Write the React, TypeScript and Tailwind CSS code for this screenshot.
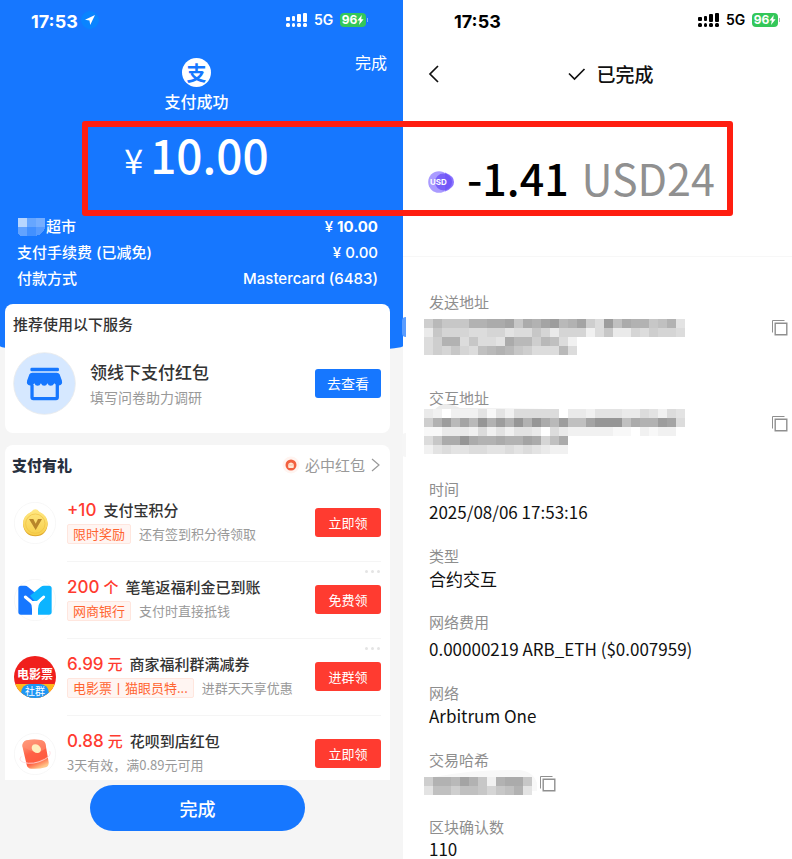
import type { ReactNode } from "react";

const BLUE = "#1677ff";

// Each hex digit is one cell, 0 = white, f = darkest grey
const SENDER_ROWS = [
  "7a888bbccd8cbdeabd75e9cbb89b4",
  "38666556645586366625833657665",
  "57bb58554caa7a952",
  "5768659aba87555a5",
];
const CONTRACT_ROWS = [
  "32022241425555503324443354254",
  "7beadafbebfbfcae99dfff9cbbed5",
  "1133325242443053222221102122",
  "58ccfcbbcbbdc69c",
  "2454455445454322",
];
const HASH_ROWS = ["7bbadb82bcc8", "4997998689b4"];

function Mosaic({ rows, children }: { rows: string[]; children?: ReactNode }) {
  const cell = 9;
  const width = rows[0].length * cell;
  const height = rows.length * cell;
  return (
    <svg
      className="block overflow-visible"
      width={width}
      height={height}
      viewBox={`0 0 ${width} ${height}`}
      shapeRendering="crispEdges"
      aria-hidden="true"
    >
      {children}
      {rows.map((row, y) =>
        row.split("").map((c, x) => {
          const v = 255 - parseInt(c, 16) * 7;
          return (
            <rect key={`${x}-${y}`} x={x * cell} y={y * cell} width={cell} height={cell} fill={`rgb(${v},${v},${v})`} />
          );
        })
      )}
    </svg>
  );
}

function Signal() {
  return (
    <svg width="21" height="15" viewBox="0 0 21 15" fill="currentColor" aria-hidden="true">
      <rect x="0" y="4" width="4" height="4" rx="1" />
      <rect x="6" y="3" width="3" height="5" rx="1" />
      <rect x="11" y="1" width="4" height="8" rx="1" />
      <rect x="17" y="0" width="4" height="9" rx="1" />
      <rect x="0" y="10" width="4" height="4" rx="1.5" />
      <rect x="6" y="10" width="3" height="4" rx="1.5" />
      <rect x="11" y="10" width="4" height="4" rx="1.5" />
      <rect x="17" y="10" width="4" height="4" rx="1.5" />
    </svg>
  );
}

function StatusRight({ capClass }: { capClass: string }) {
  return (
    <div className="flex items-center">
      <Signal />
      <span className="ml-[7px] w-[26px] text-[14px] leading-5 font-semibold">5G</span>
      <span className="flex h-[14px] w-[26px] items-center justify-center rounded-[4px] bg-[#34c759] text-[12px] leading-[14px] font-bold text-white">
        96
        <svg width="7" height="10" viewBox="0 0 7 10" fill="currentColor" aria-hidden="true">
          <path d="M4.8 0 0.4 5.6h2.4L2 10l4.6-5.8H4.2z" />
        </svg>
      </span>
      <span className={`ml-px h-1 w-px ${capClass}`} />
    </div>
  );
}

function StoreIcon() {
  return (
    <svg className="shrink-0" width="63" height="63" viewBox="39 34 192 192" aria-hidden="true">
      <circle cx="135" cy="130" r="94" fill="#d6e8ff" stroke="#e9eaec" strokeWidth="2.5" />
      <rect x="92" y="82" width="87" height="11" rx="4" fill={BLUE} />
      <path d="M97 134v38q0 4 4 4h69q4 0 4-4v-38" fill="none" stroke={BLUE} strokeWidth="10" />
      <path
        d="M98 97h74q7 0 9 5l7 19q3 14-9 15-9 1-14-7-4 8-11 8t-10-8q-3 8-10 8t-10-8q-3 8-10 8t-10-8q-4 8-13 7-12-1-9-15l7-19q2-5 9-5z"
        fill={BLUE}
      />
    </svg>
  );
}

function PointsIcon() {
  return (
    <svg className="shrink-0" width="42" height="42" viewBox="0 0 126 126" aria-hidden="true">
      <defs>
        <linearGradient id="gold" x1="0" y1="0" x2="0" y2="1">
          <stop offset="0" stopColor="#ffe884" />
          <stop offset="1" stopColor="#f7cf4a" />
        </linearGradient>
      </defs>
      <circle cx="63" cy="63" r="62" fill="#fff" stroke="#f5f5f5" strokeWidth="2.5" />
      <path d="M64 24q6 0 12 7 24 11 25 35-3 36-37 37-34-1-37-37 1-24 25-35 6-7 12-7z" fill="#e0a72b" />
      <path d="M64 22q6 0 12 7 24 11 25 35-3 34-37 36-34-2-37-36 1-24 25-35 6-7 12-7z" fill="url(#gold)" />
      <circle cx="64" cy="65" r="29" fill="none" stroke="#efbf42" strokeWidth="2" />
      <path d="M45 51h13l7 14 7-14h12L65 84z" fill="#b8862a" />
    </svg>
  );
}

function BankIcon() {
  return (
    <svg className="shrink-0" width="42" height="42" viewBox="0 0 126 126" aria-hidden="true">
      <circle cx="63" cy="63" r="62" fill="#fff" stroke="#f5f5f5" strokeWidth="2.5" />
      <path d="M13 28q0-8 8-8h12q5 0 9 4l22 18v65H21q-8 0-8-8z" fill={BLUE} />
      <path d="M48 50 80 24q5-4 10-4h15q8 0 8 8v71q0 8-8 8H62V66z" fill="#0cb4ff" />
      <path d="M34 54 52 69q10 6 20 0L89 54" fill="none" stroke="#fff" strokeWidth="9" strokeLinecap="round" />
      <path d="M46 66 80 66Q72 78 72 90v18H54V90Q54 76 46 66z" fill="#fff" />
    </svg>
  );
}

function MovieIcon() {
  return (
    <div className="relative size-[42px] shrink-0 overflow-hidden rounded-full bg-[#f01f1c] text-white">
      <div className="absolute inset-x-0 bottom-0 h-[14px] bg-[#ffb81c]" />
      <div className="pt-[9px] text-center text-[12px] leading-[18px] font-bold whitespace-nowrap">电影票</div>
      <div className="absolute bottom-0 left-1/2 h-[14px] w-[28px] -translate-x-1/2 rounded-t-[10px] rounded-b-[6px] bg-[#1e96f5] text-center text-[10px] leading-[14px]">
        社群
      </div>
    </div>
  );
}

function RedPacketIcon() {
  return (
    <svg className="shrink-0" width="42" height="42" viewBox="0 0 126 126" aria-hidden="true">
      <defs>
        <linearGradient id="packet" x1="0.2" y1="0" x2="0.6" y2="1">
          <stop offset="0" stopColor="#ffa585" />
          <stop offset="0.45" stopColor="#ff6247" />
          <stop offset="0.75" stopColor="#ff5c40" />
          <stop offset="1" stopColor="#ffc78a" />
        </linearGradient>
      </defs>
      <circle cx="63" cy="63" r="62" fill="#fff" stroke="#f5f5f5" strokeWidth="2.5" />
      <path d="M25 40q0-14 13-18 20-5 43-1 13 3 14 15l9 52q1 12-9 15-22 6-43 4-12-1-14-12z" fill="url(#packet)" />
      <path d="M25 40q0-14 13-18 20-5 43-1 13 3 14 15l1 10q-18 14-34 10-20-4-37-16z" fill="#ff8f72" opacity="0.6" />
      <ellipse cx="67" cy="47" rx="15" ry="12" fill="#ffefbe" transform="rotate(38 67 47)" />
      <path d="M22 70q-10 12 6 18 30 9 64-9 22-12 15-25" fill="none" stroke="#ffd9dd" strokeWidth="2.5" />
    </svg>
  );
}

function CopyButton({ label, className = "" }: { label: string; className?: string }) {
  return (
    <button type="button" aria-label={label} className={`size-4 shrink-0 ${className}`}>
      <svg width="16" height="16" viewBox="0 0 16 16" fill="none" stroke="#8f8f8f" aria-hidden="true">
        <path d="M0.5 12.5V0.5H12.5" />
        <path d="M3.2 3.2h11.6v11.6H3.2z" strokeWidth="1.4" />
      </svg>
    </button>
  );
}

function PayRow({ label, children }: { label: ReactNode; children: ReactNode }) {
  return (
    <div className="flex h-[26px] items-center justify-between">
      <dt className="flex items-center">{label}</dt>
      <dd>{children}</dd>
    </div>
  );
}

type Reward = {
  icon: ReactNode;
  amount: string;
  unit?: string;
  title: string;
  tag?: string;
  desc: string;
  action: string;
  more?: boolean;
};

const rewards: Reward[] = [
  { icon: <PointsIcon />, amount: "+10", title: "支付宝积分", tag: "限时奖励", desc: "还有签到积分待领取", action: "立即领" },
  { icon: <BankIcon />, amount: "200", unit: "个", title: "笔笔返福利金已到账", tag: "网商银行", desc: "支付时直接抵钱", action: "免费领", more: true },
  { icon: <MovieIcon />, amount: "6.99", unit: "元", title: "商家福利群满减券", tag: "电影票丨猫眼员特...", desc: "进群天天享优惠", action: "进群领", more: true },
  { icon: <RedPacketIcon />, amount: "0.88", unit: "元", title: "花呗到店红包", desc: "3天有效，满0.89元可用", action: "立即领" },
];

function RewardRow({ reward, last }: { reward: Reward; last: boolean }) {
  return (
    <li className="flex pl-[9px]">
      <div className="pt-[17px]">{reward.icon}</div>
      <div
        className={`relative mr-[9px] ml-[11px] flex min-w-0 flex-1 justify-between ${
          last ? "h-[64px]" : "h-[77px] border-b border-[#f5f5f5]"
        }`}
      >
        <div className="min-w-0 pt-[13px] whitespace-nowrap">
          <div className="flex h-6 items-baseline leading-6 font-medium">
            <span className="font-['Inter','Noto_Sans_CJK_SC',sans-serif] text-[17px] text-[#ff3b30]">{reward.amount}</span>
            {reward.unit && <span className="ml-1 text-[15px] text-[#ff3b30]">{reward.unit}</span>}
            <span className="ml-[7px] text-[15px] text-[#333]">{reward.title}</span>
          </div>
          <div className="mt-[2px] flex h-5 items-center text-[13px]">
            {reward.tag && (
              <span className="mr-2 rounded-[2px] border border-[#ffe6de] bg-[#fff5f2] px-[5px] leading-[18px] text-[#ff6430]">
                {reward.tag}
              </span>
            )}
            <span className="text-[#999]">{reward.desc}</span>
          </div>
        </div>
        <button type="button" className="mt-[23px] h-[29px] w-[66px] shrink-0 rounded-[3px] bg-[#ff3b30] text-[13px] text-white">
          {reward.action}
        </button>
        {reward.more && (
          <div className="absolute top-2 right-px flex gap-[3px]">
            <i className="size-[3px] rounded-full bg-[#e4e4e4]" />
            <i className="size-[3px] rounded-full bg-[#e4e4e4]" />
            <i className="size-[3px] rounded-full bg-[#e4e4e4]" />
          </div>
        )}
      </div>
    </li>
  );
}

function PaymentScreen() {
  return (
    <section className="min-w-0 bg-[#f5f5f5]">
      <header className="bg-[#1677ff] pb-[62px] text-white [border-radius:0_0_50%_50%/0_0_8px_8px]">
        <div className="flex h-10 items-center justify-between pr-[35px] pl-[31px] font-['Inter',sans-serif]">
          <div className="flex items-center gap-[3px]">
            <span className="mt-0.5 text-[18px] font-bold">17:53</span>
            <span className="flex size-[18px] items-center justify-center rounded-full bg-[#0a84ff]">
              <svg width="10" height="10" viewBox="0 0 10 10" fill="currentColor" aria-hidden="true">
                <path d="M10 0 0 4.8l4.5.7.7 4.5z" />
              </svg>
            </span>
          </div>
          <StatusRight capClass="bg-[#7fb3ff]" />
        </div>

        <div className="relative flex flex-col items-center pt-[18px] pr-[10px]">
          <button type="button" className="absolute top-[10px] right-[16px] text-[16px] leading-6">
            完成
          </button>
          <div className="flex size-[29px] items-center justify-center rounded-full bg-white text-[20px] leading-[29px] font-bold text-[#1677ff]">
            支
          </div>
          <h1 className="mt-[2px] text-[16px] leading-6 font-medium">支付成功</h1>
          <p className="mt-[11px] flex h-[60px] items-baseline gap-[7px] leading-[60px]">
            <span className="text-[34px]">¥</span>
            <span className="text-[46px] font-medium">10.00</span>
          </p>
        </div>

        <dl className="mt-[30px] pr-[25px] pl-[17px] font-['Inter','Noto_Sans_CJK_SC',sans-serif] text-[15px] font-medium">
          <PayRow
            label={
              <>
                <svg width="29" height="18" viewBox="0 0 29 18" shapeRendering="crispEdges" aria-hidden="true">
                  <path d="M1 0h9v9H1z" fill="#b7d6ff" />
                  <path d="M10 0h9v9h-9z" fill="#66a6ff" />
                  <path d="M19 0h9v9h-9z" fill="#75aeff" />
                  <path d="M1 9h9v9H5q-4 0-4-4z" fill="#62a3ff" />
                  <path d="M10 9h9v9h-9z" fill="#4290ff" />
                  <path d="M19 9h9q-1 7-9 9z" fill="#569bff" />
                </svg>
                超市
              </>
            }
          >
            ¥ <b className="font-bold">10.00</b>
          </PayRow>
          <PayRow label="支付手续费 (已减免)">¥ 0.00</PayRow>
          <PayRow label="付款方式">Mastercard (6483)</PayRow>
        </dl>
      </header>

      <main className="relative -mt-[50px] mr-[13px] ml-[5px]">
        <div className="h-[129px] rounded-[8px] bg-white pt-2 pr-[9px] pl-2">
          <h2 className="text-[15px] leading-6 font-medium text-[#333]">推荐使用以下服务</h2>
          <div className="mt-4 flex items-center">
            <StoreIcon />
            <div className="ml-[14px] flex-1">
              <div className="text-[17px] leading-[26px] font-medium text-[#333]">领线下支付红包</div>
              <div className="text-[14px] leading-6 text-[#999]">填写问卷助力调研</div>
            </div>
            <button type="button" className="h-[29px] w-[66px] rounded-[3px] bg-[#1677ff] text-[14px] text-white">
              去查看
            </button>
          </div>
        </div>

        <div className="mt-3 rounded-t-[8px] bg-white">
          <div className="flex h-10 items-center justify-between pr-[9px] pl-[7px]">
            <h2 className="text-[15px] font-black text-[#28313f]">支付有礼</h2>
            <a href="#rewards" className="flex items-center text-[15px] text-[#999]">
              <svg width="18" height="18" viewBox="0 0 18 18" aria-hidden="true">
                <circle cx="9" cy="9" r="8.5" fill="#fff4f0" />
                <circle cx="9" cy="9" r="5.5" fill="#f2603f" />
                <path d="M6.2 8q2.8-3 5.6 0v3q0 1-1 1H7.2q-1 0-1-1z" fill="#ffe9d6" />
                <path d="M6.2 8.5q2.8 1.5 5.6 0" stroke="#f8a58c" strokeWidth="0.6" fill="none" />
              </svg>
              <span className="ml-[5px]">必中红包</span>
              <svg className="ml-[5px]" width="11" height="14" viewBox="0 0 11 14" fill="none" stroke="#999" aria-hidden="true">
                <path d="M2 1l7 6-7 6" strokeWidth="1.2" />
              </svg>
            </a>
          </div>
          <ul id="rewards">
            {rewards.map((reward, i) => (
              <RewardRow key={reward.title} reward={reward} last={i === rewards.length - 1} />
            ))}
          </ul>
        </div>

        <div className="flex justify-center pt-[5px] pb-7">
          <button type="button" className="h-[46px] w-[215px] rounded-full bg-[#1677ff] text-[18px] font-medium text-white">
            完成
          </button>
        </div>
      </main>
    </section>
  );
}

function Detail({ label, children, className = "mb-[21px]" }: { label: string; children: ReactNode; className?: string }) {
  return (
    <div className={className}>
      <dt className="pl-[5px] text-[15px] leading-[22px] text-[#8e8e8e]">{label}</dt>
      {children}
    </div>
  );
}

function Value({ children }: { children: ReactNode }) {
  return <dd className="pl-[5px] text-[17px] leading-6 text-[#111]">{children}</dd>;
}

function TransactionScreen() {
  return (
    <section className="min-w-0 bg-white">
      <div className="flex h-10 items-center justify-between pr-[12px] pl-[51px] font-['Inter',sans-serif] text-black">
        <span className="mt-0.5 text-[18px] font-bold">17:53</span>
        <StatusRight capClass="bg-[#b5b5b5]" />
      </div>

      <header className="relative flex h-[68px] items-center justify-center pr-[17px] pl-11">
        <button type="button" aria-label="返回" className="absolute left-[24px]">
          <svg width="14" height="18" viewBox="0 0 14 18" fill="none" stroke="#111" strokeWidth="1.7" aria-hidden="true">
            <path d="M11 1 3 9l8 8" />
          </svg>
        </button>
        <svg width="18" height="14" viewBox="0 0 18 14" fill="none" stroke="#111" strokeWidth="1.7" aria-hidden="true">
          <path d="M1 6.5 6.5 12 16.5 2" />
        </svg>
        <h1 className="ml-[10px] text-[19px] leading-6 font-medium text-[#111]">已完成</h1>
      </header>

      <div className="flex h-[149px] items-center border-b border-[#f7f7f7] pl-[25px] whitespace-nowrap">
        <svg width="27" height="22" viewBox="0 0 27 22" aria-hidden="true">
          <circle cx="11" cy="11" r="10.8" fill="#aa9bff" />
          <path d="M17 1.5q9 3.5 9 9.5t-9 9.5z" fill="#8a73ff" />
          <circle cx="15.5" cy="11" r="8.5" fill="#6a4df5" opacity="0.75" />
          <text x="2" y="14" fontSize="8" fontWeight="700" fill="#fff" fontFamily="Inter, sans-serif">
            USD
          </text>
        </svg>
        <p className="ml-[12px] pb-[10px] text-[43px] leading-[60px] font-medium text-black">
          -1.41 <span className="ml-[3px] font-normal text-[#909090]">USD24</span>
        </p>
      </div>

      <dl className="pt-[34px] pr-[4px] pl-[21px]">
        <Detail label="发送地址" className="mb-8">
          <dd className="mt-[6px] flex items-start justify-between">
            <Mosaic rows={SENDER_ROWS} />
            <CopyButton label="复制发送地址" className="mt-px" />
          </dd>
        </Detail>
        <Detail label="交互地址" className="mb-[24px]">
          <dd className="flex items-start justify-between">
            <Mosaic rows={CONTRACT_ROWS}>
              <path d="M2 18Q8-4 22-5q6 0 14 4l90 1v9H2z" fill="#ececec" shapeRendering="auto" />
            </Mosaic>
            <CopyButton label="复制交互地址" className="mt-[7px]" />
          </dd>
        </Detail>
        <Detail label="时间">
          <Value>2025/08/06 17:53:16</Value>
        </Detail>
        <Detail label="类型" className="mb-5">
          <Value>合约交互</Value>
        </Detail>
        <Detail label="网络费用">
          <dd className="mt-1 pl-[5px] text-[17px] leading-6 text-[#111]">0.00000219 ARB_ETH ($0.007959)</dd>
        </Detail>
        <Detail label="网络">
          <Value>Arbitrum One</Value>
        </Detail>
        <Detail label="交易哈希">
          <dd className="flex h-6 items-end">
            <Mosaic rows={HASH_ROWS}>
              <path d="M10 0q40-8 85-7 14 1 18 13v8H108V0z" fill="#f8f8f8" shapeRendering="auto" />
            </Mosaic>
            <CopyButton label="复制交易哈希" className="mb-[3px] ml-[8px]" />
          </dd>
        </Detail>
        <Detail label="区块确认数" className="">
          <dd className="pl-[5px] text-[17px] leading-[22px] text-[#111]">110</dd>
        </Detail>
      </dl>
    </section>
  );
}

export default function App() {
  return (
    <div
      lang="zh-CN"
      className="relative grid min-h-screen grid-cols-[403fr_389fr] overflow-hidden bg-white font-['Noto_Sans_CJK_SC',sans-serif]"
    >
      <PaymentScreen />
      <TransactionScreen />

      {/* Smudges over the seam between the two screens */}
      <div className="absolute top-[317px] left-[402px] h-5 w-1 rounded-l-full bg-[#5a9dff]" />
      <div className="absolute top-[433px] left-[402px] h-6 w-1 rounded-l-full bg-[#f6f6f6]" />

      {/* Highlight frame around both amounts */}
      <div className="pointer-events-none absolute top-[121px] left-[82px] h-[95px] w-[651px] rounded-[3px] border-6 border-[#ff1e10]" />
    </div>
  );
}
